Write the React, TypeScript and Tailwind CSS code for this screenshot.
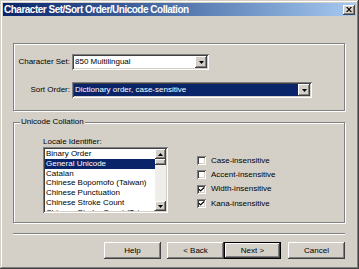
import { Check } from "lucide-react";

const raised =
  "shadow-[inset_-1px_-1px_#404040,inset_1px_1px_#ffffff,inset_-2px_-2px_#808080,inset_2px_2px_#d4d0c8]";
const sunken =
  "shadow-[inset_1px_1px_#808080,inset_-1px_-1px_#ffffff,inset_2px_2px_#404040,inset_-2px_-2px_#d4d0c8]";

const locales = [
  "Binary Order",
  "General Unicode",
  "Catalan",
  "Chinese Bopomofo (Taiwan)",
  "Chinese Punctuation",
  "Chinese Stroke Count",
  "Chinese Stroke Count (Taiwan)",
];

const options = [
  { label: "Case-insensitive", checked: false },
  { label: "Accent-insensitive", checked: false },
  { label: "Width-insensitive", checked: true },
  { label: "Kana-insensitive", checked: true },
];

function Arrow({ up = false }: { up?: boolean }) {
  return (
    <svg width="5" height="3" viewBox="0 0 5 3" className={up ? "rotate-180" : ""}>
      <path d="M0 0h5L2.5 3z" fill="#000" />
    </svg>
  );
}

function ArrowButton({ up = false, className = "" }: { up?: boolean; className?: string }) {
  return (
    <div className={`flex shrink-0 items-center justify-center bg-[#d4d0c8] ${raised} ${className}`}>
      <Arrow up={up} />
    </div>
  );
}

function Dropdown({ value, width, selected = false }: { value: string; width: string; selected?: boolean }) {
  return (
    <div className={`flex h-[16px] items-stretch bg-white p-[2px] ${sunken} ${width}`}>
      <div
        className={`flex flex-1 items-center pl-[1px] ${selected ? "bg-[#0a246a] text-white" : "text-black"}`}
      >
        {value}
      </div>
      <ArrowButton className="w-[12px]" />
    </div>
  );
}

function Button({ label, isDefault = false }: { label: string; isDefault?: boolean }) {
  return (
    <div
      className={`flex h-[17px] w-[57px] items-center justify-center bg-[#d4d0c8] ${
        isDefault ? "border border-black" : ""
      } ${raised}`}
    >
      {label}
    </div>
  );
}

export default function App() {
  return (
    <div
      className={`flex h-[269px] w-[359px] flex-col bg-[#d4d0c8] p-[3px] font-['Liberation_Sans',Arial,sans-serif] text-[8px] leading-[10px] text-black shadow-[inset_-1px_-1px_#404040,inset_1px_1px_#d4d0c8,inset_-2px_-2px_#808080,inset_2px_2px_#ffffff]`}
    >
      {/* Title bar */}
      <div className="flex h-[13px] shrink-0 items-center justify-between bg-gradient-to-r from-[#0a246a] to-[#a6caf0] pl-[1px] pr-[1px]">
        <span className="text-[10px] font-bold tracking-[-0.5px] text-white">
          Character Set/Sort Order/Unicode Collation
        </span>
        <div className={`flex h-[10px] w-[12px] items-center justify-center bg-[#d4d0c8] ${raised}`}>
          <svg width="6" height="5" viewBox="0 0 6 5">
            <path d="M0 0h1.5L3 1.8 4.5 0H6L3.8 2.5 6 5H4.5L3 3.2 1.5 5H0l2.2-2.5z" fill="#000" />
          </svg>
        </div>
      </div>

      <div className="flex flex-1 flex-col pl-[10px] pr-[11px]">
        {/* Character set / sort order */}
        <div className="mt-[27px] h-[68px] border border-[#808080] pt-[10px] shadow-[1px_1px_#ffffff,inset_1px_1px_#ffffff]">
          <div className="grid grid-cols-[56px_auto] items-center gap-x-[2px] gap-y-[12px]">
            <span className="text-right">Character Set:</span>
            <Dropdown value="850 Multilingual" width="w-[137px]" />
            <span className="text-right">Sort Order:</span>
            <Dropdown value="Dictionary order, case-sensitive" width="w-[240px]" selected />
          </div>
        </div>

        {/* Unicode collation */}
        <div className="relative mt-[11px] flex h-[101px] items-start border border-[#808080] pl-[29px] pt-[14px] shadow-[1px_1px_#ffffff,inset_1px_1px_#ffffff]">
          <span className="absolute left-[6px] top-[-6px] bg-[#d4d0c8] px-[1px]">Unicode Collation</span>

          <div className="flex w-[125px] flex-col">
            <span>Locale Identifier:</span>
            <div className={`flex h-[66px] overflow-hidden bg-white p-[2px] ${sunken}`}>
              <div className="flex flex-1 flex-col overflow-hidden">
                {locales.map((name, i) => (
                  <div
                    key={name}
                    className={`h-[9.8px] shrink-0 whitespace-nowrap pl-[1px] leading-[9.8px] ${
                      i === 1 ? "bg-[#0a246a] text-white" : ""
                    }`}
                  >
                    {name}
                  </div>
                ))}
              </div>
              <div className="flex w-[11px] flex-col bg-[#efeeeb]">
                <ArrowButton up className="h-[10px]" />
                <div className={`h-[6px] bg-[#d4d0c8] ${raised}`} />
                <div className="flex-1" />
                <ArrowButton className="h-[10px]" />
              </div>
            </div>
          </div>

          <div className="ml-[29px] mt-[16.5px] flex flex-col">
            {options.map((o) => (
              <div key={o.label} className="flex h-[14.3px] items-center gap-[5px]">
                <div className={`flex h-[9px] w-[9px] items-center justify-center bg-white ${sunken}`}>
                  {o.checked && <Check size={7} strokeWidth={4} className="text-black" />}
                </div>
                <span>{o.label}</span>
              </div>
            ))}
          </div>
        </div>

        {/* Separator */}
        <div className="mt-[10px] h-[2px] border-t border-b border-t-[#808080] border-b-white" />

        {/* Buttons */}
        <div className="mt-[7px] flex justify-end">
          <Button label="Help" />
          <div className="ml-[6px] flex">
            <Button label="< Back" />
            <Button label="Next >" isDefault />
          </div>
          <div className="ml-[7px]">
            <Button label="Cancel" />
          </div>
        </div>
      </div>
    </div>
  );
}
